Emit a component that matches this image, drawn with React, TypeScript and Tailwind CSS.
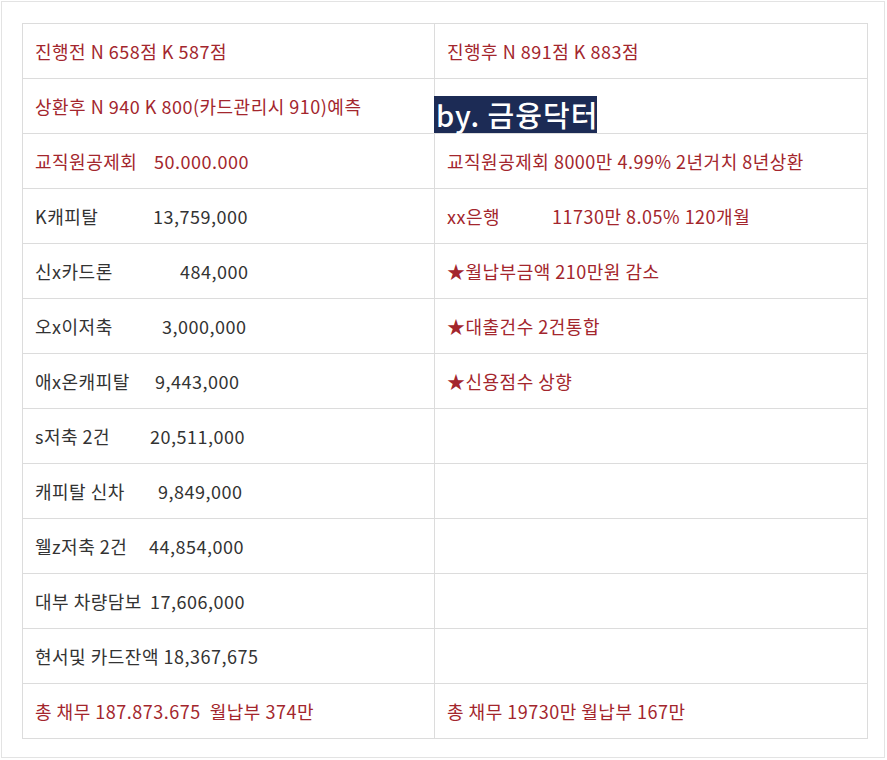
import React from "react";

const RED = "text-[#a3262d]";
const DARK = "text-[#333333]";

type Cell = { label: string; num?: string; gap?: number; red?: boolean };

const leftRows: Cell[] = [
  { label: "진행전 N 658점 K 587점", red: true },
  { label: "상환후 N 940 K 800(카드관리시 910)예측", red: true },
  { label: "교직원공제회", num: "50.000.000", gap: 119, red: true },
  { label: "K캐피탈", num: "13,759,000", gap: 118 },
  { label: "신x카드론", num: "484,000", gap: 145 },
  { label: "오x이저축", num: "3,000,000", gap: 127 },
  { label: "애x온캐피탈", num: "9,443,000", gap: 120 },
  { label: "s저축 2건", num: "20,511,000", gap: 115 },
  { label: "캐피탈 신차", num: "9,849,000", gap: 123 },
  { label: "웰z저축 2건", num: "44,854,000", gap: 114 },
  { label: "대부 차량담보", num: "17,606,000", gap: 115 },
  { label: "현서및 카드잔액 18,367,675" },
  { label: "총 채무 187.873.675  월납부 374만", red: true },
];

const rightRows: Cell[] = [
  { label: "진행후 N 891점 K 883점", red: true },
  { label: "", red: true },
  { label: "교직원공제회 8000만 4.99% 2년거치 8년상환", red: true },
  { label: "xx은행", num: "11730만 8.05% 120개월", gap: 105, red: true },
  { label: "★월납부금액 210만원 감소", red: true },
  { label: "★대출건수 2건통합", red: true },
  { label: "★신용점수 상향", red: true },
  { label: "" },
  { label: "" },
  { label: "" },
  { label: "" },
  { label: "" },
  { label: "총 채무 19730만 월납부 167만", red: true },
];

function CellView({ c, right, idx }: { c: Cell; right?: boolean; idx: number }) {
  const color = c.red ? RED : DARK;
  return (
    <div
      className={`relative h-[55px] flex items-center border-b border-[#dcdcdc] ${
        right ? "" : "border-r"
      } pl-[12px] ${color} whitespace-pre`}
    >
      {c.num ? (
        <>
          <span className="inline-block shrink-0" style={{ width: c.gap }}>
            {c.label}
          </span>
          <span>{c.num}</span>
        </>
      ) : (
        <span>{c.label}</span>
      )}
      {right && idx === 1 && (
        <div className="absolute left-[-1px] top-[17px] h-[37px] w-[163px] bg-[#1c2b55] text-white flex items-center pl-[2px] text-[29px] font-medium tracking-[1px] leading-none">
          by. 금융닥터
        </div>
      )}
    </div>
  );
}

export default function App() {
  return (
    <div
      className="w-[887px] h-[760px] bg-white p-[1px]"
      style={{ fontFamily: '"Noto Sans CJK KR", "Noto Sans", sans-serif' }}
    >
      <div className="w-[884px] h-[757px] border border-[#e3e3e3] pt-[21px] pl-[20px]">
        <div className="w-[846px] border-t border-l border-r border-[#dcdcdc] grid grid-cols-[412px_432px] text-[18px] tracking-[0.5px] leading-none">
          {leftRows.map((c, i) => (
            <React.Fragment key={i}>
              <CellView c={c} idx={i} />
              <CellView c={rightRows[i]} right idx={i} />
            </React.Fragment>
          ))}
        </div>
      </div>
    </div>
  );
}
